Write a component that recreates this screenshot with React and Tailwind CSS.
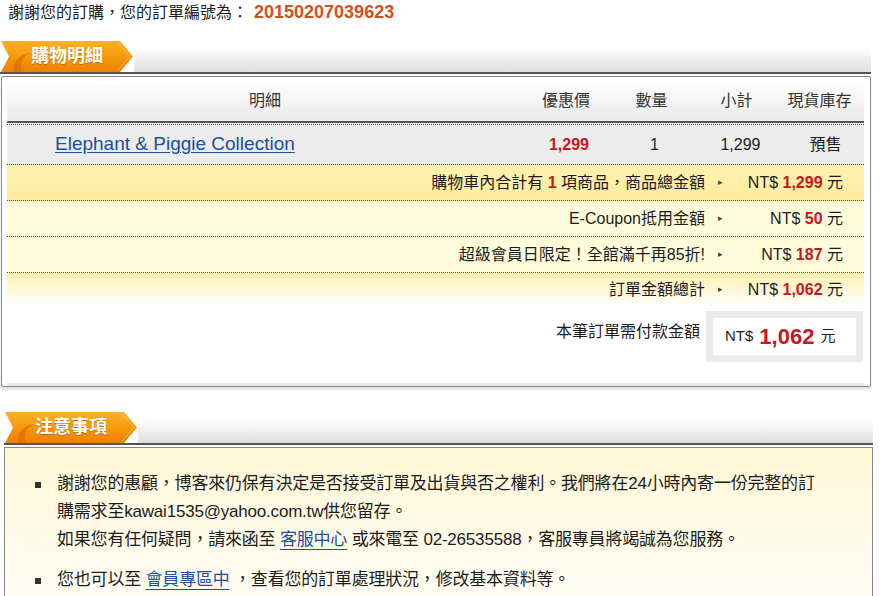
import React from "react";

const font = "font-['Liberation_Sans','Noto_Sans_CJK_TC',sans-serif]";

function Tab({ label }) {
  return (
    <div className="relative w-[134px] h-[31px] shrink-0">
      <svg width="134" height="31" viewBox="0 0 134 31" className="absolute inset-0">
        <defs>
          <linearGradient id={"g" + label} x1="0" y1="0" x2="0" y2="1">
            <stop offset="0" stopColor="#fbb22a" />
            <stop offset="0.5" stopColor="#f59a0c" />
            <stop offset="1" stopColor="#ee7f00" />
          </linearGradient>
        </defs>
        <path d="M1 0 H120 L133 15.5 L120 31 H1 L9 15.5 Z" fill={"url(#g" + label + ")"} />
        <path d="M14 31 C12 22 18 14 30 12 C22 16 19 23 22 31 Z" fill="#e06a00" opacity="0.7" />
        <path d="M118 2 L130 15.5 L118 29" fill="none" stroke="#ffd27a" strokeWidth="1" opacity="0.6" />
      </svg>
      <span className="absolute left-[31px] top-[4px] text-[18px] leading-[22px] font-bold text-white [text-shadow:0_1px_1px_rgba(150,60,0,0.5)]">
        {label}
      </span>
    </div>
  );
}

function SectionHead({ label }) {
  return (
    <div>
      <div className="flex items-end h-[31px]">
        <Tab label={label} />
        <div className="flex-1 h-[24px] bg-gradient-to-b from-white to-[#dedede]" />
      </div>
      <div className="h-[2px] bg-[#555]" />
    </div>
  );
}

function SumRow({ label, amount, bg }) {
  return (
    <div className={`flex items-center h-[36px] border-b border-dotted border-[#444] text-[16px] ${bg}`}>
      <div className="flex-1 text-right">{label}</div>
      <div className="w-[30px] text-center text-[9px] text-[#444]">▸</div>
      <div className="w-[108px] text-right">
        NT$ <b className="text-[#c8161d]">{amount}</b> 元
      </div>
      <div className="w-[21px]" />
    </div>
  );
}

function Bullet() {
  return (
    <span className="w-[22px] shrink-0 pt-[12px]">
      <span className="block w-[6px] h-[6px] bg-[#333]" />
    </span>
  );
}

export default function App() {
  return (
    <div className={`w-[892px] h-[596px] overflow-hidden bg-white ${font} text-[#1c1c1c]`}>
      <div className="pl-[8px] pt-[1px] h-[24px] text-[16px] leading-[22px]">
        謝謝您的訂購，您的訂單編號為：
        <b className="ml-[6px] text-[18px] text-[#d54e1c]">20150207039623</b>
      </div>

      <div className="mt-[17px] w-[871px]">
        <SectionHead label="購物明細" />
        <div className="mt-[2px] ml-[1px] border border-[#888] rounded-[2px] shadow-[0_3px_2px_#e4e4e4] pl-[5px] pr-[6px] pt-[4px]">
          <div className="grid grid-cols-[516px_86px_85px_85px_1fr] h-[40px] items-center text-[16px] text-[#333] bg-gradient-to-b from-white to-[#e9e9e9]">
            <div className="text-center">明細</div>
            <div className="text-center">優惠價</div>
            <div className="text-center">數量</div>
            <div className="text-center">小計</div>
            <div className="text-center pr-[4px]">現貨庫存</div>
          </div>
          <div className="h-[2px] bg-[#555]" />
          <div className="h-[2px] border-b border-dotted border-[#444]" />
          <div className="grid grid-cols-[516px_86px_85px_85px_1fr] h-[40px] items-center text-[16px] bg-[#ececec] border-b border-dotted border-[#444]">
            <div className="pl-[48px]">
              <a className="text-[19px] text-[#1d4f9c] underline underline-offset-2">Elephant &amp; Piggie Collection</a>
            </div>
            <div className="text-center pl-[6px] font-bold text-[#c8161d]">1,299</div>
            <div className="text-center pl-[6px]">1</div>
            <div className="text-center pl-[8px]">1,299</div>
            <div className="text-center pl-[8px]">預售</div>
          </div>
          <SumRow
            bg="bg-gradient-to-b from-[#fff2b0] to-[#ffeb9e]"
            label={<>購物車內合計有 <b className="text-[#c8161d]">1</b> 項商品，商品總金額</>}
            amount="1,299"
          />
          <SumRow bg="bg-[#fffcdc]" label="E-Coupon抵用金額" amount="50" />
          <SumRow bg="bg-[#fffcdc]" label="超級會員日限定！全館滿千再85折!" amount="187" />
          <div className="flex items-center h-[34px] text-[16px] bg-gradient-to-b from-[#fff0b0] to-white">
            <div className="flex-1 text-right">訂單金額總計</div>
            <div className="w-[30px] text-center text-[9px] text-[#444]">▸</div>
            <div className="w-[108px] text-right">
              NT$ <b className="text-[#c8161d]">1,062</b> 元
            </div>
            <div className="w-[21px]" />
          </div>
          <div className="flex justify-end items-start mt-[4px] pb-[21px] border-b-[3px] border-[#e8e8e8]">
            <div className="text-[16px] pt-[9px] pr-[6px]">本筆訂單需付款金額</div>
            <div className="w-[157px] h-[51px] border-[7px] border-[#ebebeb] bg-white flex items-center pl-[12px] text-[15px] mr-[1px]">
              NT$ <b className="mx-[6px] text-[22px] text-[#c8161d]">1,062</b> 元
            </div>
          </div>
        </div>
      </div>

      <div className="mt-[25px] ml-[4px] w-[869px]">
        <SectionHead label="注意事項" />
        <div className="mt-[2px] border border-[#888] h-[200px] bg-gradient-to-b from-[#fff7d6] via-[#fffbea] to-white pt-[22px] pl-[30px] text-[17px] leading-[28px] tracking-[-0.2px]">
          <div className="flex">
            <Bullet />
            <div className="whitespace-nowrap">
              謝謝您的惠顧，博客來仍保有決定是否接受訂單及出貨與否之權利。我們將在24小時內寄一份完整的訂
              <br />
              購需求至kawai1535@yahoo.com.tw供您留存。
              <br />
              如果您有任何疑問，請來函至 <a className="text-[#1d4f9c] underline underline-offset-4">客服中心</a> 或來電至 02-26535588，客服專員將竭誠為您服務。
            </div>
          </div>
          <div className="flex mt-[12px]">
            <Bullet />
            <div className="whitespace-nowrap">
              您也可以至 <a className="text-[#1d4f9c] underline underline-offset-4">會員專區中</a> ，查看您的訂單處理狀況，修改基本資料等。
            </div>
          </div>
        </div>
      </div>
    </div>
  );
}
